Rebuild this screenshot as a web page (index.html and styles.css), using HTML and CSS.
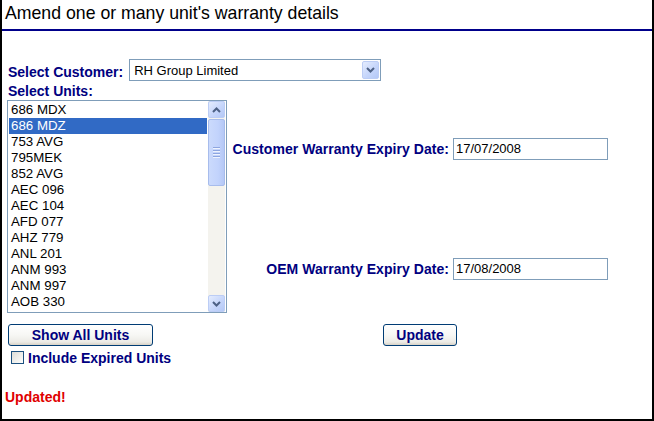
FILE: index.html
```html
<!DOCTYPE html>
<html>
<head>
<meta charset="utf-8">
<title>Amend warranty details</title>
<link rel="stylesheet" href="styles.css">
</head>
<body>
<div class="frame">
  <div class="title">Amend one or many unit's warranty details</div>
  <div class="customer-row">
    <span class="label cust-label">Select Customer:</span>
    <div class="select">
      <span class="select-text">RH Group Limited</span>
      <span class="xp-btn drop-btn"><svg width="9" height="6" viewBox="0 0 9 6"><polyline points="1,1 4.5,4.5 8,1" fill="none" stroke="#4d6185" stroke-width="2"/></svg></span>
    </div>
  </div>
  <div class="label units-label">Select Units:</div>
  <div class="main">
    <div class="listbox">
      <div class="items">
        <div class="item">686 MDX</div>
        <div class="item selected">686 MDZ</div>
        <div class="item">753 AVG</div>
        <div class="item">795MEK</div>
        <div class="item">852 AVG</div>
        <div class="item">AEC 096</div>
        <div class="item">AEC 104</div>
        <div class="item">AFD 077</div>
        <div class="item">AHZ 779</div>
        <div class="item">ANL 201</div>
        <div class="item">ANM 993</div>
        <div class="item">ANM 997</div>
        <div class="item">AOB 330</div>
      </div>
      <div class="scrollbar">
        <span class="xp-btn sb-btn"><svg width="9" height="6" viewBox="0 0 9 6"><polyline points="1,5 4.5,1.5 8,5" fill="none" stroke="#4d6185" stroke-width="2"/></svg></span>
        <span class="thumb"><span class="grip"></span><span class="grip"></span><span class="grip"></span><span class="grip"></span></span>
        <span class="track"></span>
        <span class="xp-btn sb-btn"><svg width="9" height="6" viewBox="0 0 9 6"><polyline points="1,1 4.5,4.5 8,1" fill="none" stroke="#4d6185" stroke-width="2"/></svg></span>
      </div>
    </div>
    <div class="dates">
      <div class="date-row">
        <span class="label date-label">Customer Warranty Expiry Date:</span>
        <span class="input">17/07/2008</span>
      </div>
      <div class="date-row oem">
        <span class="label date-label">OEM Warranty Expiry Date:</span>
        <span class="input">17/08/2008</span>
      </div>
    </div>
  </div>
  <div class="button-row">
    <div class="left-cell"><span class="button show-all">Show All Units</span></div>
    <div class="right-cell"><span class="button update">Update</span></div>
  </div>
  <div class="check-row">
    <span class="checkbox"></span>
    <span class="label">Include Expired Units</span>
  </div>
  <div class="updated">Updated!</div>
</div>
</body>
</html>
```
FILE: styles.css
```css
html, body {
  margin: 0;
  padding: 0;
  background: #fff;
}
.frame {
  box-sizing: border-box;
  width: 654px;
  height: 421px;
  border: 2px solid #000;
  border-top: none;
  font-family: "Liberation Sans", Arial, sans-serif;
  overflow: hidden;
}
.title {
  height: 22px;
  padding: 2px 0 5px 3px;
  line-height: 22px;
  font-size: 17.7px;
  color: #000;
  border-bottom: 2px solid #00008b;
  white-space: nowrap;
}
.label {
  font-size: 14px;
  font-weight: bold;
  color: #000080;
  white-space: nowrap;
}
.customer-row {
  display: flex;
  align-items: flex-start;
  margin-top: 28px;
  height: 22px;
}
.cust-label {
  margin-left: 6px;
  padding-top: 4px;
  line-height: 18px;
}
.select {
  box-sizing: border-box;
  display: flex;
  align-items: center;
  justify-content: space-between;
  margin-left: 6px;
  width: 252px;
  height: 22px;
  border: 1px solid #7f9db9;
  padding: 1px;
  background: #fff;
}
.select-text {
  font-size: 13px;
  color: #000;
  padding-left: 3px;
}
.xp-btn {
  box-sizing: border-box;
  display: flex;
  align-items: center;
  justify-content: center;
  width: 17px;
  height: 17px;
  border: 1px solid #bccdf5;
  border-radius: 2px;
  background: linear-gradient(135deg, #e4ecfe 0%, #c6d6fb 55%, #b4c8f6 100%);
}
.drop-btn {
  height: 18px;
}
.units-label {
  margin: 2px 0 0 6px;
  line-height: 17px;
  height: 17px;
}
.main {
  display: flex;
  height: 213px;
}
.listbox {
  box-sizing: border-box;
  display: flex;
  margin-left: 5px;
  width: 220px;
  height: 213px;
  border: 1px solid #7f9db9;
  padding: 1px;
  background: #fff;
}
.items {
  flex: 1;
  padding-right: 1px;
}
.item {
  height: 16px;
  line-height: 16px;
  font-size: 13.3px;
  color: #000;
  padding-left: 2px;
  white-space: nowrap;
}
.item.selected {
  background: #316ac5;
  color: #fff;
}
.scrollbar {
  display: flex;
  flex-direction: column;
  width: 17px;
  margin-top: -1px;
  margin-bottom: -1px;
  background: #f4f3ee;
}
.sb-btn {
  flex: none;
}
.thumb {
  box-sizing: border-box;
  display: flex;
  flex-direction: column;
  align-items: center;
  justify-content: center;
  gap: 1px;
  height: 67px;
  margin-top: 1px;
  border: 1px solid #a7bcec;
  border-radius: 2px;
  background: linear-gradient(90deg, #cbdafc 0%, #c2d3fc 60%, #b5c8f6 100%);
}
.grip {
  display: block;
  width: 7px;
  height: 1px;
  background: #8ea6e0;
  border-bottom: 1px solid #eef3fe;
}
.track {
  flex: 1;
}
.dates {
  box-sizing: border-box;
  width: 384px;
  padding: 38px 3px 0 1px;
}
.date-row {
  display: flex;
  align-items: center;
  justify-content: flex-end;
  height: 22px;
}
.date-row.oem {
  margin-top: 98px;
}
.date-label {
  line-height: 16px;
  margin-right: 4px;
  letter-spacing: 0.05px;
}
.input {
  box-sizing: border-box;
  display: block;
  width: 155px;
  height: 22px;
  line-height: 20px;
  border: 1px solid #7f9db9;
  padding-left: 2px;
  font-size: 13px;
  color: #000;
  background: #fff;
}
.button-row {
  display: flex;
  margin-top: 11px;
  height: 22px;
}
.left-cell {
  width: 226px;
}
.right-cell {
  width: 384px;
  display: flex;
  justify-content: center;
}
.button {
  box-sizing: border-box;
  display: flex;
  align-items: center;
  justify-content: center;
  height: 22px;
  border: 1px solid #003c74;
  border-radius: 3px;
  background: linear-gradient(180deg, #ffffff 0%, #f7f7f4 50%, #ecebe6 85%, #d8d2c6 100%);
  font-size: 14px;
  font-weight: bold;
  color: #000080;
  line-height: 16px;
}
.show-all {
  margin-left: 6px;
  width: 145px;
}
.update {
  width: 74px;
}
.check-row {
  display: flex;
  align-items: flex-start;
  margin-top: 4px;
  height: 16px;
  line-height: 16px;
}
.checkbox {
  box-sizing: border-box;
  display: block;
  width: 13px;
  height: 13px;
  margin: 1px 4px 0 9px;
  border: 1px solid #1c5180;
  background: linear-gradient(135deg, #dcdcd7 0%, #f4f4f1 70%, #ffffff 100%);
}
.updated {
  margin: 23px 0 0 3px;
  font-size: 14px;
  font-weight: bold;
  line-height: 16px;
  color: #e00000;
}
```
